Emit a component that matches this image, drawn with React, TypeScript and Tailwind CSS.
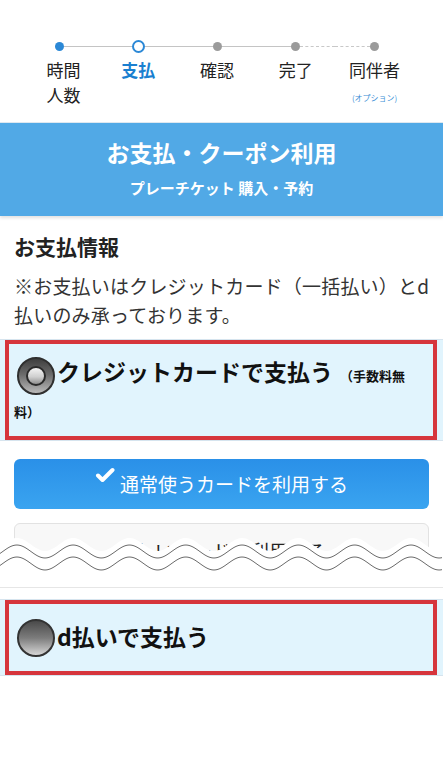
import React from 'react'

const steps = [
  { label: ['時間', '人数'], state: 'done' },
  { label: ['支払'], state: 'current' },
  { label: ['確認'], state: 'todo' },
  { label: ['完了'], state: 'todo' },
  { label: ['同伴者'], state: 'todo', note: '(オプション)' },
]

const font = { fontFamily: '"Noto Sans CJK JP", "Noto Sans", sans-serif' }

function wavePath(offset: number, w: number, close?: number) {
  const pts: string[] = []
  for (let x = 0; x <= w; x += 2) {
    const y = 15.5 + offset + 6.5 * Math.cos((2 * Math.PI * (x - 45)) / 56.3)
    pts.push(`${x === 0 ? 'M' : 'L'}${x},${y.toFixed(2)}`)
  }
  if (close !== undefined) pts.push(`L${w},${close} L0,${close} Z`)
  return pts.join(' ')
}

function Radio({ checked }: { checked?: boolean }) {
  if (checked) {
    return (
      <span className="flex shrink-0 items-center justify-center w-[38px] h-[38px] rounded-full border-2 border-[#2f2f2f] bg-[linear-gradient(#3f3f3f,#6a6a6a_45%,#b9b9b9)]">
        <span className="w-[20px] h-[20px] rounded-full border-2 border-[#2a2a2a] bg-[linear-gradient(#f4f4f4,#cfcfcf_55%,#8f8f8f)]" />
      </span>
    )
  }
  return (
    <span className="block shrink-0 w-[38px] h-[38px] rounded-full border-2 border-[#333] bg-[linear-gradient(#4a4a4a,#7c7c7c_50%,#d6d6d6)]" />
  )
}

export default function App() {
  return (
    <div className="w-[443px] min-h-[781px] bg-white text-[#222]" style={font}>
      {/* stepper */}
      <div className="h-[123px] pt-[40px] pl-[20px] border-b border-[#dfe9f1]">
        <div className="grid grid-cols-5 w-[394px]">
          {steps.map((s, i) => (
            <div key={i} className="flex flex-col items-center">
              <div className="flex items-center w-full h-[12px]">
                <span className={`flex-1 ${i === 0 ? '' : i === 4 ? 'border-t border-dashed border-[#c8c8c8]' : 'border-t border-[#c4c4c4]'}`} />
                {s.state === 'done' && <span className="w-[9px] h-[9px] rounded-full bg-[#2b88d6]" />}
                {s.state === 'current' && <span className="w-[13px] h-[13px] rounded-full border-2 border-[#2b88d6] bg-white" />}
                {s.state === 'todo' && <span className="w-[9px] h-[9px] rounded-full bg-[#9b9b9b]" />}
                <span className={`flex-1 ${i === 4 ? '' : i === 3 ? 'border-t border-dashed border-[#c8c8c8]' : 'border-t border-[#c4c4c4]'}`} />
              </div>
              <div className={`mt-[5px] text-[17px] leading-[25px] ${s.state === 'current' ? 'font-bold text-[#1a7fd0]' : 'text-[#222]'} ${i === 0 ? 'pl-[8px]' : ''}`}>
                {s.label.map((l, j) => (
                  <div key={j}>{l}</div>
                ))}
              </div>
              {s.note && <div className="mt-[10px] text-[8px] leading-[12px] text-[#3d8fd6]">{s.note}</div>}
            </div>
          ))}
        </div>
      </div>

      {/* title band */}
      <div className="bg-[#51a9e6] pt-[14px] pb-[18px] text-center text-white shadow-[0_2px_3px_rgba(0,0,0,0.12)]">
        <div className="text-[23px] leading-[30px] font-bold">お支払・クーポン利用</div>
        <div className="mt-[10px] text-[15px] leading-[21px] font-bold">プレーチケット 購入・予約</div>
      </div>

      <div className="px-[14px] pt-[16px]">
        <h2 className="text-[21px] leading-[28px] font-bold">お支払情報</h2>
        <p className="mt-[11px] text-[19px] leading-[29px] text-[#333] whitespace-nowrap tracking-[0.2px]">
          ※お支払いはクレジットカード（一括払い）とd
          <br />
          払いのみ承っております。
        </p>
      </div>

      {/* credit card */}
      <div className="mt-[10px] bg-[#e1f4fd] border-y border-[#d6e4ee]">
        <div className="ml-[5px] mr-[6px] border-4 border-[#d6353c] bg-[#e1f4fd] pt-[12px] pb-[14px] pl-[5px]">
          <div className="flex items-center">
            <span className="ml-[3px]">
              <Radio checked />
            </span>
            <span className="ml-[2px] mb-[10px] text-[23px] leading-[30px] font-bold text-[#111]">クレジットカードで支払う</span>
            <span className="ml-[7px] text-[13px] leading-[20px] font-bold text-[#111]">（手数料無</span>
          </div>
          <div className="mt-[6px] text-[13px] leading-[20px] font-bold text-[#111]">料）</div>
        </div>
      </div>

      <div className="relative px-[14px] pt-[18px] pb-[14px] border-b border-[#e6e6e6]">
        <button className="flex items-center justify-center w-full h-[50px] rounded-[6px] bg-[linear-gradient(#2a90e8,#3aa4f0)] text-white text-[19px]">
          <svg className="w-[20px] h-[16px] mr-[5px] -mt-[18px]" viewBox="0 0 20 16" fill="none" stroke="white" strokeWidth={4} strokeLinecap="round" strokeLinejoin="round">
            <path d="M3 8.5l4.5 4.5L17.5 3" />
          </svg>
          通常使うカードを利用する
        </button>
        <button className="mt-[14px] flex items-start justify-center pt-[13px] w-full h-[50px] rounded-[6px] border border-[#e2e2e2] bg-[#f8f8f8] text-[#222] text-[19px]">
          新しいカードを利用する
        </button>
        <svg className="absolute left-0 bottom-0 w-[443px] h-[51px]" viewBox="0 0 443 51">
          <path d={wavePath(-7, 443, 51)} fill="white" />
          <path d={wavePath(0, 443)} fill="none" stroke="#6a6a6a" strokeWidth={1} />
          <path d={wavePath(12, 443)} fill="none" stroke="#6a6a6a" strokeWidth={1} />
        </svg>
      </div>

      {/* d払い */}
      <div className="mt-[11px] bg-[#e1f4fd] border-y border-[#d6e4ee]">
        <div className="ml-[5px] mr-[6px] h-[75px] border-4 border-[#d6353c] bg-[#e1f4fd] pl-[8px] flex items-center">
          <Radio />
          <span className="ml-[2px] mb-[4px] text-[23px] leading-[30px] font-bold text-[#111]">d払いで支払う</span>
        </div>
      </div>
    </div>
  )
}
